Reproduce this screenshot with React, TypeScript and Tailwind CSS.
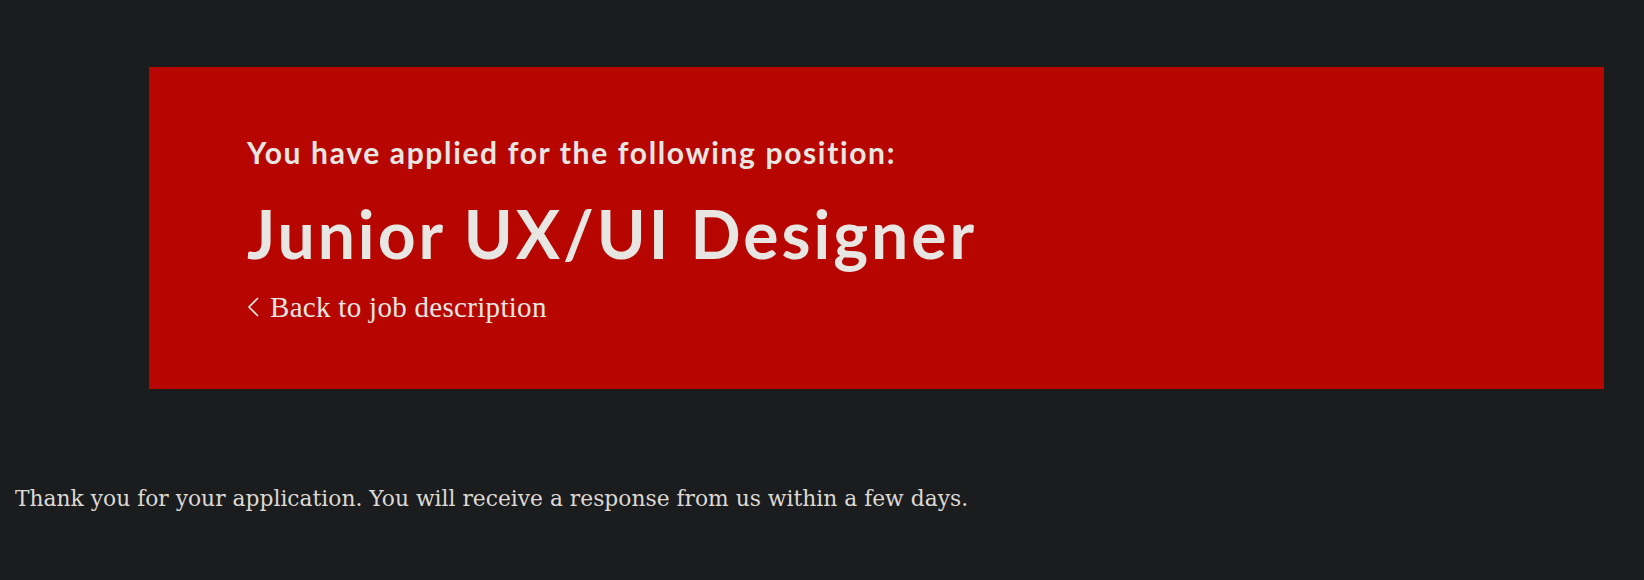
export default function App() {
  return (
    <div className="min-h-[580px] w-full bg-[#1b1c1e] pt-[67px]">
      {/* Position banner */}
      <div className="ml-[149px] h-[322px] w-[1455px] bg-[#b70600] pl-[98px] pt-[67px] text-[#e8e6e3]">
        <h3 className="font-['Lato',sans-serif] text-[30px] leading-[36px] font-bold tracking-[1.65px]">
          You have applied for the following position:
        </h3>
        <h1 className="mt-[24px] font-['Lato',sans-serif] text-[66px] leading-[80px] font-bold tracking-[3px]">
          Junior UX/UI Designer
        </h1>
        <a
          href="#"
          className="mt-[17px] flex items-center gap-[11px] font-['Liberation_Serif',serif] text-[29px] leading-[32px] tracking-[0.3px]"
        >
          <svg width="12" height="20" viewBox="0 0 12 20" fill="none" stroke="currentColor" strokeWidth="1.6">
            <path d="M11 1 L2 10 L11 19" />
          </svg>
          Back to job description
        </a>
      </div>

      <p className="mt-[94px] pl-[15px] font-['DejaVu_Serif',serif] text-[21.8px] leading-[32px] text-[#dcd9d4]">
        Thank you for your application. You will receive a response from us within a few days.
      </p>
    </div>
  );
}
